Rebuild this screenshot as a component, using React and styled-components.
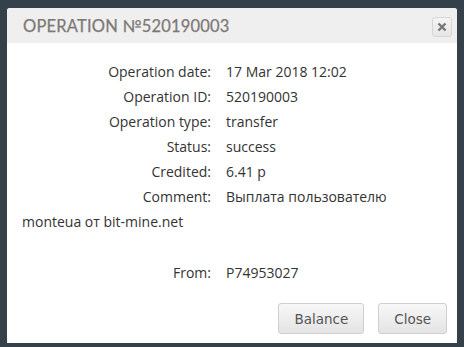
import React from 'react'
import styled, { createGlobalStyle } from 'styled-components'

const GlobalStyle = createGlobalStyle`
  html, body {
    margin: 0;
    padding: 0;
    background: #35414a;
  }
  body {
    font-family: "Open Sans", "Liberation Sans", sans-serif;
  }
`

const Page = styled.div`
  width: 464px;
  height: 347px;
  padding: 8px 7px 4px 7px;
  box-sizing: border-box;
`

const Dialog = styled.div`
  background: #fff;
  height: 335px;
  border-radius: 3px 3px 0 0;
  display: flex;
  flex-direction: column;
  overflow: hidden;
`

const Header = styled.div`
  height: 35px;
  background: #efefef;
  display: flex;
  align-items: center;
  justify-content: space-between;
  padding: 0 5px 0 16px;
`

const Title = styled.h2`
  margin: 0;
  font-family: "Lato", "Liberation Sans", sans-serif;
  font-size: 16.5px;
  font-weight: 400;
  letter-spacing: 0.2px;
  color: #7d7975;
  padding-top: 1px;
  -webkit-text-stroke: 0.25px #7d7975;
`

const CloseX = styled.button`
  width: 20px;
  height: 20px;
  padding: 0;
  border: 1px solid #d6d6d6;
  border-radius: 3px;
  background: linear-gradient(#f4f4f4, #e6e6e6);
  display: flex;
  align-items: center;
  justify-content: center;
  margin-top: 2px;
`

const Body = styled.div`
  flex: 1;
  padding: 16px 15px 0 15px;
  font-size: 14px;
  line-height: 25px;
  color: #333;
`

const Row = styled.div``

const Label = styled.span`
  display: inline-block;
  width: 189px;
  text-align: right;
  padding-right: 15px;
  box-sizing: content-box;
`

const Spacer = styled.div`
  height: 26px;
`

const Footer = styled.div`
  display: flex;
  justify-content: flex-end;
  gap: 14px;
  padding: 0 10px 9px 0;
`

const Button = styled.button`
  height: 31px;
  padding: 0 15px;
  min-width: ${p => p.$wide ? '85px' : '68px'};
  font-family: "DejaVu Sans", Verdana, sans-serif;
  font-size: 13.5px;
  color: #555;
  border: 1px solid #cfcfcf;
  border-radius: 3px;
  background: linear-gradient(#f7f7f7, #e4e4e4);
`

const rows = [
  ['Operation date:', '17 Mar 2018 12:02'],
  ['Operation ID:', '520190003'],
  ['Operation type:', 'transfer'],
  ['Status:', 'success'],
  ['Credited:', '6.41 р'],
  ['Comment:', 'Выплата пользователю monteua от bit-mine.net'],
]

export default function App() {
  return (
    <>
      <GlobalStyle />
      <Page>
        <Dialog>
          <Header>
            <Title>OPERATION №520190003</Title>
            <CloseX>
              <svg width="10" height="10" viewBox="0 0 10 10">
                <path d="M1.5 1.5 L8.5 8.5 M8.5 1.5 L1.5 8.5" stroke="#777" strokeWidth="2.4" />
              </svg>
            </CloseX>
          </Header>
          <Body>
            {rows.map(([l, v]) => (
              <Row key={l}><Label>{l}</Label>{v}</Row>
            ))}
            <Spacer />
            <Row><Label>From:</Label>P74953027</Row>
          </Body>
          <Footer>
            <Button $wide>Balance</Button>
            <Button>Close</Button>
          </Footer>
        </Dialog>
      </Page>
    </>
  )
}
